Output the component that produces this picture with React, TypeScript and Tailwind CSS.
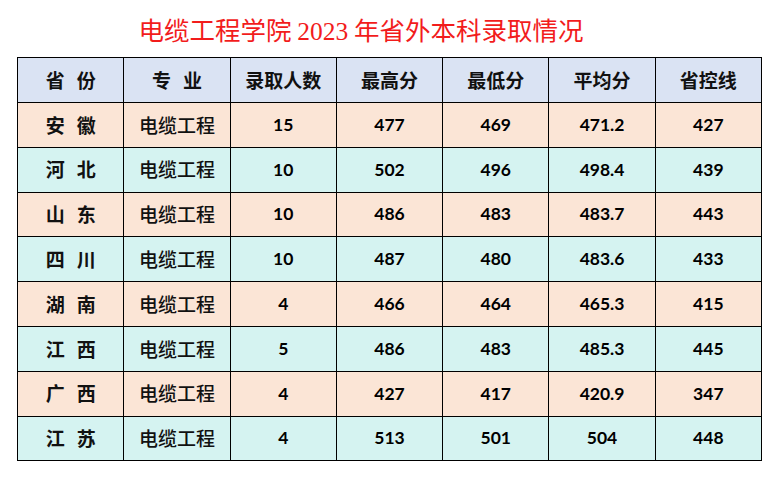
import React from "react";

const rows: [string, string, string, string, string, string, string, string][] = [
  ["安", "徽", "15", "477", "469", "471.2", "427", "p"],
  ["河", "北", "10", "502", "496", "498.4", "439", "c"],
  ["山", "东", "10", "486", "483", "483.7", "443", "p"],
  ["四", "川", "10", "487", "480", "483.6", "433", "c"],
  ["湖", "南", "4", "466", "464", "465.3", "415", "p"],
  ["江", "西", "5", "486", "483", "485.3", "445", "c"],
  ["广", "西", "4", "427", "417", "420.9", "347", "p"],
  ["江", "苏", "4", "513", "501", "504", "448", "c"],
];

const cjk = "font-['Noto_Sans_CJK_SC',sans-serif]";
const num = "font-['Lato','Open_Sans',sans-serif]";

export default function App() {
  return (
    <div className="w-[778px] h-[478px] bg-white relative overflow-hidden">
      <div className="h-[57px] flex items-start justify-center pr-[56px]">
        <div className={`${cjk} text-[25.5px] leading-[26px] mt-[16px] text-[#f21c1c] whitespace-pre`}>
          电缆工程学院 <span className="font-['Liberation_Serif',serif]">2023</span> 年省外本科录取情况
        </div>
      </div>
      <table className="ml-[17px] w-[745px] border-collapse table-fixed">
        <thead>
          <tr className="h-[45px] bg-[#dae3f3]">
            {["省 份", "专 业", "录取人数", "最高分", "最低分", "平均分", "省控线"].map((h, i) => (
              <th key={i} className={`border border-black ${cjk} text-[19px] font-bold text-[#111] p-0 whitespace-pre`}>
                {h.includes(" ") ? (
                  <span className="inline-flex gap-[12px]">
                    <span>{h[0]}</span>
                    <span>{h[2]}</span>
                  </span>
                ) : (
                  h
                )}
              </th>
            ))}
          </tr>
        </thead>
        <tbody>
          {rows.map((r, i) => (
            <tr key={i} className={`h-[44.8px] ${r[7] === "p" ? "bg-[#fbe5d6]" : "bg-[#d5f3f1]"}`}>
              <td className={`border border-black p-0 text-center ${cjk} text-[19px] font-bold text-[#111]`}>
                <span className="inline-flex gap-[12px]">
                  <span>{r[0]}</span>
                  <span>{r[1]}</span>
                </span>
              </td>
              <td className={`border border-black p-0 text-center ${cjk} text-[19px] font-medium text-[#111]`}>
                电缆工程
              </td>
              {r.slice(2, 7).map((v, j) => (
                <td key={j} className={`border border-black p-0 text-center ${num} text-[17.5px] font-bold text-black`}>
                  {v}
                </td>
              ))}
            </tr>
          ))}
        </tbody>
      </table>
    </div>
  );
}
